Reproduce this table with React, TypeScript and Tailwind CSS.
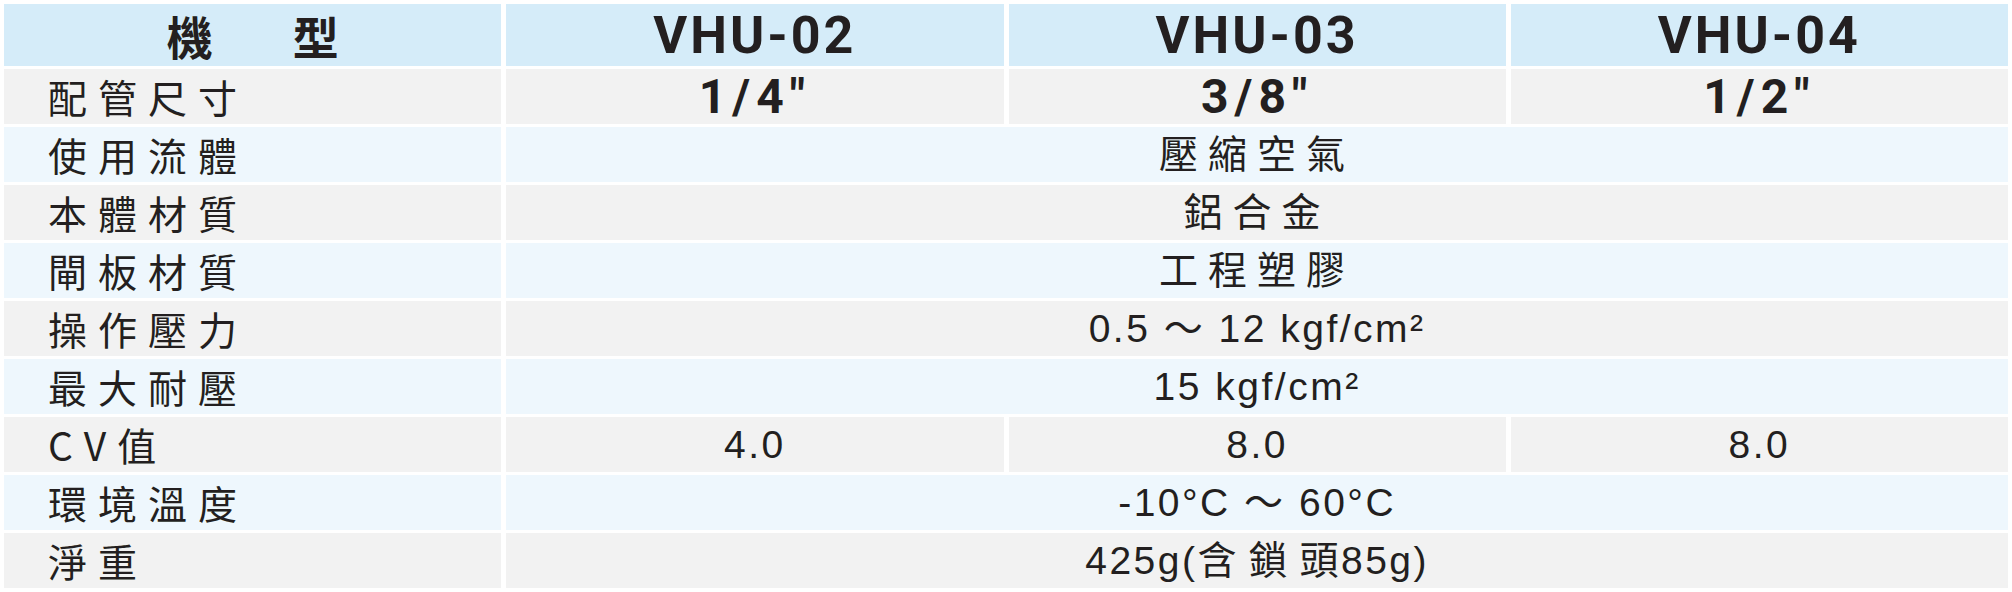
import React from "react";

const labelCls =
  "flex items-center pl-[44px] text-[39px] tracking-[11px] font-['Noto_Sans_CJK_TC',sans-serif] text-[#231f20] leading-none";
const valCls =
  "flex items-center justify-center text-[39px] tracking-[2.5px] font-['Liberation_Sans','Noto_Sans_CJK_TC',sans-serif] text-[#231f20] leading-none";
const boldCls =
  "flex items-center justify-center text-[48px] tracking-[6px] font-bold font-['Roboto',sans-serif] text-[#231f20] leading-none";

type Row = { label: string; values: string[]; cjk?: boolean };

const rows: Row[] = [
  { label: "使用流體", values: ["壓縮空氣"], cjk: true },
  { label: "本體材質", values: ["鋁合金"], cjk: true },
  { label: "閘板材質", values: ["工程塑膠"], cjk: true },
  { label: "操作壓力", values: ["0.5 ～ 12 kgf/cm²"] },
  { label: "最大耐壓", values: ["15 kgf/cm²"] },
  { label: "CV值", values: ["4.0", "8.0", "8.0"] },
  { label: "環境溫度", values: ["-10°C ～ 60°C"] },
];

export default function App() {
  const bgFor = (i: number) => (i % 2 === 0 ? "bg-[#eef7fd]" : "bg-[#f2f2f2]");
  return (
    <div className="w-[2012px] h-[592px] bg-white p-[4px]">
      <div className="grid grid-cols-4 gap-x-[5px] gap-y-[3px] auto-rows-[55px] grid-rows-[62px]">
        {/* header */}
        <div className="bg-[#d5ecf9] flex items-center justify-center gap-[80px] text-[46px] font-bold font-['Noto_Sans_CJK_TC',sans-serif] text-[#231f20] leading-none">
          <span>機</span>
          <span>型</span>
        </div>
        {["VHU-02", "VHU-03", "VHU-04"].map((m) => (
          <div
            key={m}
            className="bg-[#d5ecf9] flex items-center justify-center text-[52px] tracking-[3px] font-bold font-['Roboto',sans-serif] text-[#231f20] leading-none pt-[2px]"
          >
            {m}
          </div>
        ))}

        {/* 配管尺寸 */}
        <div className={`bg-[#f2f2f2] ${labelCls}`}>配管尺寸</div>
        {['1/4"', '3/8"', '1/2"'].map((v) => (
          <div key={v} className={`bg-[#f2f2f2] ${boldCls}`}>
            {v}
          </div>
        ))}

        {rows.map((r, i) => {
          const bg = bgFor(i);
          return (
            <React.Fragment key={r.label}>
              <div className={`${bg} ${labelCls}`}>{r.label}</div>
              {r.values.length === 1 ? (
                <div
                  className={`${bg} ${valCls} col-span-3 ${r.cjk ? "tracking-[10px]" : ""}`}
                >
                  {r.values[0]}
                </div>
              ) : (
                r.values.map((v, j) => (
                  <div key={j} className={`${bg} ${valCls}`}>
                    {v}
                  </div>
                ))
              )}
            </React.Fragment>
          );
        })}

        {/* 淨重 */}
        <div className={`bg-[#f2f2f2] ${labelCls}`}>淨重</div>
        <div className={`bg-[#f2f2f2] ${valCls} col-span-3`}>
          425g(<span className="tracking-[12px]">含鎖</span>頭85g)
        </div>
      </div>
    </div>
  );
}
